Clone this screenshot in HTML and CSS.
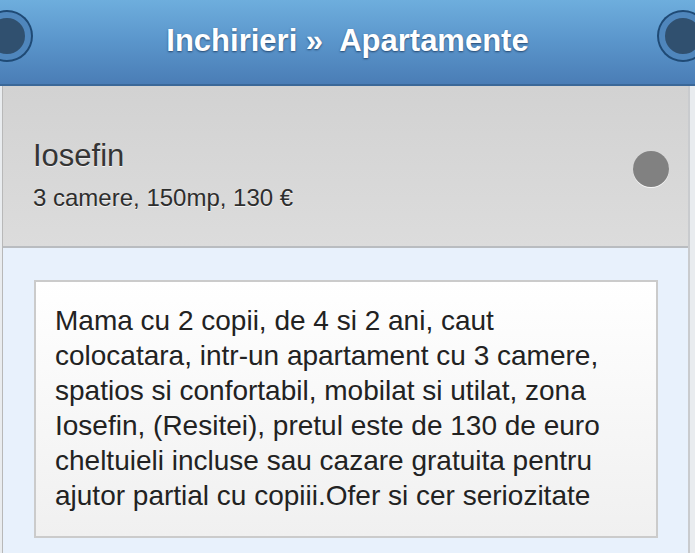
FILE: index.html
```html
<!DOCTYPE html>
<html>
<head>
<meta charset="utf-8">
<link rel="stylesheet" href="styles.css">
</head>
<body>
<div class="header">
  <span class="hbtn hbtn-left"></span>
  <h1 class="title">Inchirieri »&nbsp; Apartamente</h1>
  <span class="hbtn hbtn-right"></span>
</div>
<div class="page">
  <div class="item">
    <div class="item-text">
      <div class="item-title">Iosefin</div>
      <div class="item-sub">3 camere, 150mp, 130 €</div>
    </div>
    <span class="dot"></span>
  </div>
  <div class="content">
    <div class="box">Mama cu 2 copii, de 4 si 2 ani, caut colocatara, intr-un apartament cu 3 camere, spatios si confortabil, mobilat si utilat, zona Iosefin, (Resitei), pretul este de 130 de euro cheltuieli incluse sau cazare gratuita pentru ajutor partial cu copiii.Ofer si cer seriozitate</div>
  </div>
</div>
</body>
</html>
```
FILE: styles.css
```css
html, body {
  margin: 0;
  padding: 0;
  background: #e9ecef;
  font-family: "Liberation Sans", Arial, sans-serif;
  overflow: hidden;
}
.header {
  position: relative;
  border-bottom: 2px solid #3b6898;
  background: linear-gradient(to bottom, #6eaedd 0%, #5a95cb 50%, #4a7db6 100%);
  display: flex;
  align-items: center;
  justify-content: center;
  padding-bottom: 3px;
  box-sizing: content-box;
  height: 81px;
}
.title {
  margin: 0;
  color: #fff;
  font-size: 31px;
  font-weight: bold;
  text-shadow: 0 1px 2px rgba(20, 45, 80, 0.75);
  white-space: nowrap;
}
.hbtn {
  position: absolute;
  top: 12px;
  width: 36px;
  height: 36px;
  border-radius: 50%;
  background: #30506f;
  border: 6px solid #4f86bc;
  box-shadow: 0 0 0 2px #1f4a75;
}
.hbtn-left { left: -17px; }
.hbtn-right { left: 659px; }
.page {
  margin-left: 2px;
  width: 685px;
  border-left: 1px solid #b8b8b8;
  border-right: 2px solid #c9cbce;
  min-height: 470px;
  background: #e8f1fc;
}
.item {
  display: flex;
  align-items: flex-start;
  justify-content: space-between;
  padding: 52px 19px 33px 30px;
  background: linear-gradient(to bottom, #d2d2d2 0%, #dcdcdc 100%);
  border-bottom: 2px solid #b9bcc0;
}
.item-title {
  font-size: 31px;
  line-height: 36px;
  color: #353535;
  text-shadow: 0 1px 0 rgba(255, 255, 255, 0.7);
}
.item-sub {
  margin-top: 9px;
  font-size: 24px;
  line-height: 30px;
  color: #2e2e2e;
  text-shadow: 0 1px 0 rgba(255, 255, 255, 0.7);
}
.dot {
  margin-top: 13px;
  width: 36px;
  height: 36px;
  border-radius: 50%;
  background: #818181;
  box-shadow: 0 1px 0 rgba(255, 255, 255, 0.8);
}
.content {
  padding: 32px 30px 20px 31px;
}
.box {
  background: linear-gradient(to bottom, #ffffff 0%, #f0f0f0 100%);
  border: 2px solid #cbcbcb;
  padding: 21px 18px 23px 19px;
  font-size: 28px;
  line-height: 35px;
  color: #222;
}
```
